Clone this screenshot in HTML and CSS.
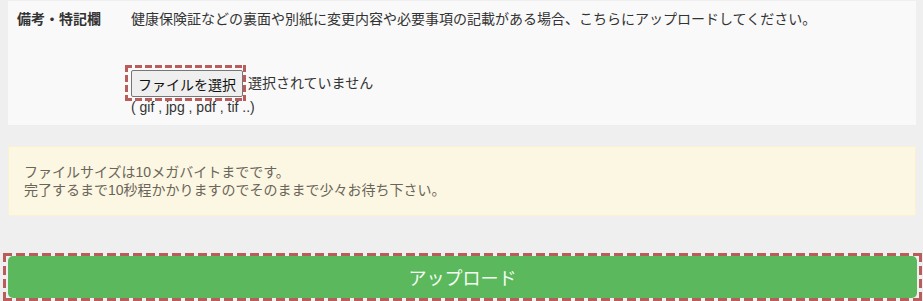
FILE: index.html
```html
<!DOCTYPE html>
<html lang="ja">
<head>
<meta charset="utf-8">
<title>アップロード</title>
<link rel="stylesheet" href="styles.css">
</head>
<body>
<div class="panel">
  <div class="label">備考・特記欄</div>
  <div class="field">
    <p class="desc">健康保険証などの裏面や別紙に変更内容や必要事項の記載がある場合、こちらにアップロードしてください。</p>
    <div class="file-row">
      <span class="file-focus"><button class="file-btn" type="button">ファイルを選択</button></span>
      <span class="file-name">選択されていません</span>
    </div>
    <div class="hint">( gif , jpg , pdf , tif ..)</div>
  </div>
</div>
<div class="notice">
  <p>ファイルサイズは10メガバイトまでです。</p>
  <p>完了するまで10秒程かかりますのでそのままで少々お待ち下さい。</p>
</div>
<div class="submit-wrap">
  <button class="submit" type="button">アップロード</button>
</div>
</body>
</html>
```
FILE: styles.css
```css
html, body {
  margin: 0;
  padding: 0;
}
body {
  background: #efefef;
  font-family: "Liberation Sans", "Noto Sans CJK JP", sans-serif;
  font-size: 14px;
  color: #333;
  overflow: hidden;
}
p { margin: 0; }

.panel {
  margin: 1px 7px 0 8px;
  background: #f9f9f9;
  display: flex;
  padding: 8px 0 11px 9px;
}
.label {
  width: 114px;
  flex: none;
  font-weight: bold;
  line-height: 20px;
  color: #333;
}
.field {
  flex: 1;
}
.desc {
  line-height: 20px;
}
.file-row {
  margin-top: 36px;
  display: flex;
  align-items: center;
}
.file-focus {
  display: inline-flex;
  margin-left: -6px;
  padding: 5px 3px 4px 6px;
  background:
    repeating-linear-gradient(90deg, #b95c5c 0 7px, transparent 7px 10px) left top / 100% 3px no-repeat,
    repeating-linear-gradient(90deg, #b95c5c 0 7px, transparent 7px 10px) left bottom / 100% 3px no-repeat,
    repeating-linear-gradient(180deg, #b95c5c 0 7px, transparent 7px 10px) left top / 3px 100% no-repeat,
    repeating-linear-gradient(180deg, #b95c5c 0 7px, transparent 7px 10px) right top / 3px 100% no-repeat;
}
.file-btn {
  height: 27px;
  padding: 0 6px;
  font-family: "Liberation Sans", "Noto Sans CJK JP", sans-serif;
  font-size: 14px;
  color: #111;
  background: #efefef;
  border: 1px solid #767676;
  border-radius: 2px;
}
.file-name {
  margin-left: 2px;
  line-height: 20px;
}
.hint {
  margin-top: -1px;
  font-size: 14px;
  line-height: 14px;
  color: #333;
}

.notice {
  margin: 21px 7px 0 8px;
  background: #fcf7e2;
  border: 1px solid #faf0d4;
  padding: 16px 15px;
  color: #6a655a;
  line-height: 18px;
}

.submit-wrap {
  margin: 37px 1px 0 3px;
  padding: 3px 5px;
  background:
    repeating-linear-gradient(90deg, #b95c5c 0 9px, transparent 9px 13px) left top / 100% 3px no-repeat,
    repeating-linear-gradient(90deg, #b95c5c 0 9px, transparent 9px 13px) left bottom / 100% 3px no-repeat,
    repeating-linear-gradient(180deg, #b95c5c 0 9px, transparent 9px 13px) left top / 3px 100% no-repeat,
    repeating-linear-gradient(180deg, #b95c5c 0 9px, transparent 9px 13px) right top / 3px 100% no-repeat;
}
.submit {
  display: block;
  width: 100%;
  height: 42px;
  background: #5cb85c;
  border: none;
  border-radius: 5px;
  color: #f4fff4;
  font-family: "Liberation Sans", "Noto Sans CJK JP", sans-serif;
  font-size: 18px;
}
```
